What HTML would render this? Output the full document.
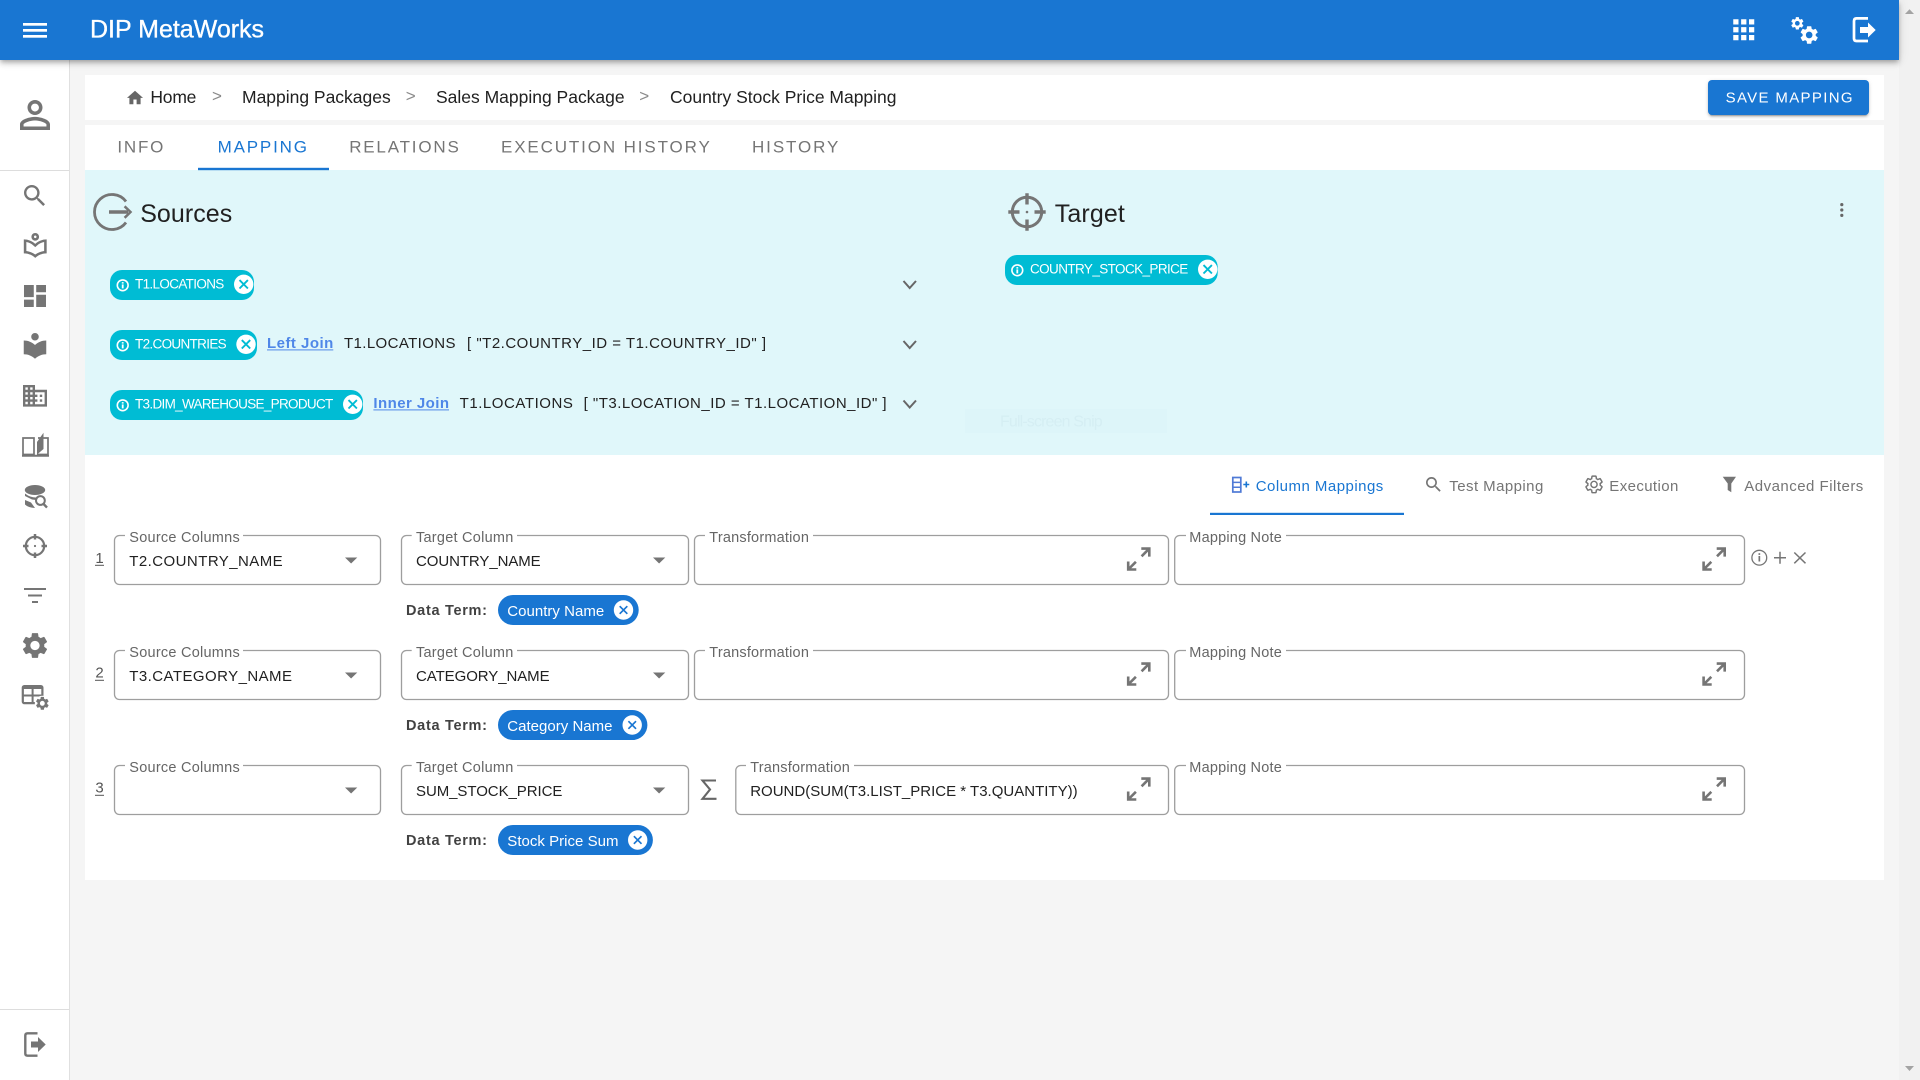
<!DOCTYPE html>
<html lang="en">
<head>
<meta charset="utf-8">
<title>DIP MetaWorks</title>
<style>
html,body{margin:0;padding:0;width:1920px;height:1080px;overflow:hidden;background:#f5f5f5}
div{position:absolute;box-sizing:border-box}
#side{left:0;top:60px;width:70px;height:1020px;background:#fff;border-right:1px solid #e0e0e0}
#head{left:0;top:0;width:1899px;height:60px;background:#1976d2;box-shadow:0 2px 4px -1px rgba(0,0,0,.2),0 4px 5px 0 rgba(0,0,0,.14),0 1px 10px 0 rgba(0,0,0,.12)}
#bar{left:1899px;top:0;width:21px;height:1080px;background:#f1f1f1}
#crumb{left:85px;top:75px;width:1799px;height:45px;background:#fff}
#tabs{left:85px;top:125px;width:1799px;height:45px;background:#fff}
#cyan{left:85px;top:170px;width:1799px;height:285px;background:#e0f7fa}
#map{left:85px;top:455px;width:1799px;height:425px;background:#fff}
#save{left:1708px;top:80px;width:161px;height:35px;border-radius:4px;background:#1976d2;box-shadow:0 3px 1px -2px rgba(0,0,0,.2),0 2px 2px 0 rgba(0,0,0,.14),0 1px 5px 0 rgba(0,0,0,.12)}
svg{position:absolute;left:0;top:0}
text{font-family:"Liberation Sans",sans-serif}
.crumb{font-size:17.5px;fill:#212121}
.sep{font-size:17px;fill:#8a8a8a}
.tab{font-size:17px;fill:#757575}
.h{font-size:25px;fill:#212121}
.chip{font-size:13.5px;fill:#fff}
.tx{font-size:15px;fill:#212121}
.lnk{font-size:15px;font-weight:bold;fill:#4f87e8}
.sub{font-size:15px;fill:#757575}
.lab{font-size:14.5px;fill:#666}
.val{font-size:15px;fill:#212121}
.num{font-size:15px;fill:#555}
.dt{font-size:14.5px;font-weight:bold;fill:#424242}
.ct{font-size:15px;fill:#fff}
.box{fill:#fff;stroke:#9e9e9e;stroke-width:1.3}
.exp{fill:none;stroke:#757575;stroke-width:2.6}
</style>
</head>
<body>
<div id="side"></div>
<div id="bar"></div>
<div id="crumb"></div>
<div id="tabs"></div>
<div id="cyan"></div>
<div id="map"></div>
<div id="save"></div>
<div id="head"></div>
<svg width="1920" height="1080" viewBox="0 0 1920 1080" xmlns="http://www.w3.org/2000/svg">
<defs>
<path id="gear" d="M19.14,12.94c0.04-0.3,0.06-0.61,0.06-0.94c0-0.32-0.02-0.64-0.07-0.94l2.03-1.58c0.18-0.14,0.23-0.41,0.12-0.61l-1.92-3.32c-0.12-0.22-0.37-0.29-0.59-0.22l-2.39,0.96c-0.5-0.38-1.03-0.7-1.62-0.94L14.4,2.81c-0.04-0.24-0.24-0.41-0.48-0.41h-3.84c-0.24,0-0.43,0.17-0.47,0.41L9.25,5.35C8.66,5.59,8.12,5.92,7.63,6.29L5.24,5.33c-0.22-0.08-0.47,0-0.59,0.22L2.74,8.87C2.62,9.08,2.66,9.34,2.86,9.48l2.03,1.58C4.84,11.36,4.8,11.69,4.8,12s0.02,0.64,0.07,0.94l-2.03,1.58c-0.18,0.14-0.23,0.41-0.12,0.61l1.92,3.32c0.12,0.22,0.37,0.29,0.59,0.22l2.39-0.96c0.5,0.38,1.03,0.7,1.62,0.94l0.36,2.54c0.05,0.24,0.24,0.41,0.48,0.41h3.84c0.24,0,0.44-0.17,0.47-0.41l0.36-2.54c0.59-0.24,1.13-0.56,1.62-0.94l2.39,0.96c0.22,0.08,0.47,0,0.59-0.22l1.92-3.32c0.12-0.22,0.07-0.47-0.12-0.61L19.14,12.94z M12,15.6c-1.98,0-3.6-1.62-3.6-3.6s1.62-3.6,3.6-3.6s3.6,1.62,3.6,3.6S13.98,15.6,12,15.6z"/>
<path id="srch" d="M15.5 14h-.79l-.28-.27C15.41 12.59 16 11.11 16 9.5 16 5.91 13.09 3 9.5 3S3 5.91 3 9.5 5.91 16 9.5 16c1.61 0 3.09-.59 4.23-1.57l.27.28v.79l5 4.99L20.49 19l-4.99-5zm-6 0C7.01 14 5 11.99 5 9.5S7.01 5 9.5 5 14 7.01 14 9.5 11.99 14 9.5 14z"/>
<g id="inf"><circle cx="0" cy="0" r="5.4" fill="none" stroke="#fff" stroke-width="1.6"/><rect x="-.9" y="-.9" width="1.8" height="4" fill="#fff"/><rect x="-.9" y="-3.2" width="1.8" height="1.5" fill="#fff"/></g>
<g id="cx"><circle cx="0" cy="0" r="9.7" fill="#fff"/><path d="M-4.2-4.2L4.2 4.2M4.2-4.2L-4.2 4.2" stroke="#00bcd4" stroke-width="1.9" fill="none"/></g>
<g id="bx"><circle cx="0" cy="0" r="9.7" fill="#fff"/><path d="M-3.8-3.8L3.8 3.8M3.8-3.8L-3.8 3.8" stroke="#1976d2" stroke-width="1.7" fill="none"/></g>
<g id="ex"><path class="exp" d="M0 2.6H8V10.6M7.5 3.1L.3 10.3"/><path class="exp" d="M-13.1 15.5V23.5H-5M-12.6 23L-5.4 15.8"/></g>
<path id="dd" d="M0 0H12.3L6.1 6Z" fill="#757575"/>
</defs>

<!-- header -->
<g fill="#fff">
<rect x="23" y="23" width="24" height="2.7"/><rect x="23" y="29" width="24" height="2.7"/><rect x="23" y="35" width="24" height="2.7"/>
<text x="90" y="37.7" font-size="25" textLength="174" stroke="#fff" stroke-width=".35">DIP MetaWorks</text>
<path transform="translate(1728 14) scale(1.3125)" d="M4 8h4V4H4v4zm6 12h4v-4h-4v4zm-6 0h4v-4H4v4zm0-6h4v-4H4v4zm6 0h4v-4h-4v4zm6-10v4h4V4h-4zm-6 4h4V4h-4v4zm6 6h4v-4h-4v4zm0 6h4v-4h-4v4z"/>
<use href="#gear" transform="translate(1789.6 15.6) scale(.645)"/>
<use href="#gear" transform="translate(1798.2 24) scale(.914)"/>
<path d="M1868 18.4H1856.5Q1854 18.4 1854 21V38.5Q1854 41 1856.5 41H1868" fill="none" stroke="#fff" stroke-width="2.7"/>
<path d="M1860 27H1868V22.5L1875.7 30L1868 37.5V33H1860Z"/>
</g>

<!-- scrollbar arrows -->
<path d="M1905 14H1914L1909.5 9.3Z" fill="#a3a3a3"/>
<path d="M1905 1066H1914L1909.5 1071Z" fill="#a3a3a3"/>

<!-- sidebar -->
<g fill="#757575">
<rect x="0" y="170" width="69" height="1" fill="#ddd"/>
<rect x="0" y="1009" width="69" height="1" fill="#ddd"/>
<path transform="translate(12.5 92.5) scale(1.875)" d="M12 5.9c1.16 0 2.1.94 2.1 2.1s-.94 2.1-2.1 2.1S9.9 9.16 9.9 8s.94-2.1 2.1-2.1m0 9c2.97 0 6.1 1.46 6.1 2.1v1.1H5.9V17c0-.64 3.13-2.1 6.1-2.1M12 4C9.79 4 8 5.79 8 8s1.79 4 4 4 4-1.79 4-4-1.79-4-4-4zm0 9c-2.67 0-8 1.34-8 4v3h16v-3c0-2.66-5.33-4-8-4z"/>
<use href="#srch" transform="translate(20.4 181.4) scale(1.2)"/>
<path transform="translate(20 229.2) scale(1.27)" d="M12 9c1.66 0 3-1.34 3-3s-1.34-3-3-3-3 1.34-3 3 1.34 3 3 3zm0-4c.55 0 1 .45 1 1s-.45 1-1 1-1-.45-1-1 .45-1 1-1zm0 6.55C9.64 9.35 6.48 8 3 8v11c3.48 0 6.64 1.35 9 3.55 2.36-2.19 5.52-3.55 9-3.55V8c-3.48 0-6.64 1.35-9 3.55zm7 5.58c-2.53.34-4.93 1.3-7 2.82-2.06-1.52-4.47-2.49-7-2.83V10.1c2.1.38 4.05 1.35 5.64 2.83L12 14.15l1.36-1.22c1.59-1.48 3.54-2.45 5.64-2.83v7.03z"/>
<path transform="translate(20.33 281.3) scale(1.222)" d="M3 13h8V3H3v10zm0 8h8v-6H3v6zm10 0h8V11h-8v10zm0-18v6h8V3h-8z"/>
<path transform="translate(20 330.5) scale(1.25)" d="M12 11.55C9.64 9.35 6.48 8 3 8v11c3.48 0 6.64 1.35 9 3.55 2.36-2.19 5.52-3.55 9-3.55V8c-3.48 0-6.64 1.35-9 3.55zM12 8c1.66 0 3-1.34 3-3s-1.34-3-3-3-3 1.34-3 3 1.34 3 3 3z"/>
<path transform="translate(20.6 381.4) scale(1.2)" d="M12 7V3H2v18h20V7H12zM6 19H4v-2h2v2zm0-4H4v-2h2v2zm0-4H4V9h2v2zm0-4H4V5h2v2zm4 12H8v-2h2v2zm0-4H8v-2h2v2zm0-4H8V9h2v2zm0-4H8V5h2v2zm10 12h-8v-2h2v-2h-2v-2h2v-2h-2V9h8v10zm-2-8h-2v2h2v-2zm0 4h-2v2h2v-2z"/>
<!-- book -->
<path d="M23 438H34V454.5H23ZM38 438H48V454.5H37" fill="none" stroke="#757575" stroke-width="1.7"/>
<path d="M22 454.8H49V456.7H22Z"/>
<path d="M37 442L43.5 432.7V449L37 454.5Z"/>
<!-- db search -->
<ellipse cx="35" cy="490" rx="10.2" ry="5"/>
<path d="M25 496L32 499.5L36 500V497.5Q30 497.5 25 493.5ZM25 500V504.5Q28 507.6 35 508L31 502.5Z"/>
<circle cx="40.4" cy="500.5" r="4.4" fill="#fff" stroke="#757575" stroke-width="2"/>
<path d="M43.6 504L47 507.6" stroke="#757575" stroke-width="2.4" fill="none"/>
<!-- crosshair -->
<circle cx="35" cy="546" r="9.2" fill="none" stroke="#757575" stroke-width="2.2"/>
<path d="M35 534V539.5M35 552.5V558M23 546H28.5M41.5 546H47" stroke="#757575" stroke-width="2.5" fill="none"/>
<circle cx="35" cy="546" r="1.1"/>
<!-- filter -->
<rect x="24" y="588" width="22" height="2"/><rect x="28" y="594.5" width="14" height="2"/><rect x="32" y="601" width="6" height="2"/>
<use href="#gear" transform="translate(19.5 630) scale(1.29)"/>
<!-- table gear -->
<rect x="22.8" y="686.1" width="19.6" height="17" rx="1.5" fill="none" stroke="#757575" stroke-width="2.2"/>
<rect x="22.8" y="686" width="19.6" height="3"/>
<path d="M32.6 688V703M23 695.5H42" stroke="#757575" stroke-width="2" fill="none"/>
<circle cx="42.3" cy="703.3" r="7.5" fill="#fff"/>
<use href="#gear" transform="translate(34.3 695.3) scale(.67)"/>
<!-- bottom exit -->
<path d="M37.5 1033.3H27.5Q25.3 1033.3 25.3 1035.5V1053.5Q25.3 1055.7 27.5 1055.7H37.5" fill="none" stroke="#757575" stroke-width="2.4"/>
<path d="M31 1041.5H38V1037L45.7 1044.5L38 1052V1047.5H31Z"/>
</g>

<!-- breadcrumb -->
<path transform="translate(125.4 88.3) scale(.8)" d="M10 20v-6h4v6h5v-8h3L12 3 2 12h3v8z" fill="#666"/>
<text class="crumb" x="150.4" y="102.8" textLength="46">Home</text>
<text class="sep" x="212" y="101.6" textLength="10">&gt;</text>
<text class="crumb" x="242" y="102.8" textLength="148.7">Mapping Packages</text>
<text class="sep" x="405.8" y="101.6" textLength="10">&gt;</text>
<text class="crumb" x="436" y="102.8" textLength="188.6">Sales Mapping Package</text>
<text class="sep" x="639.2" y="101.6" textLength="10">&gt;</text>
<text class="crumb" x="670" y="102.8" textLength="226.5">Country Stock Price Mapping</text>
<text x="1725.6" y="102.7" font-size="15" fill="#fff" textLength="127">SAVE MAPPING</text>

<!-- tabs -->
<text class="tab" x="117.4" y="152.7" textLength="46">INFO</text>
<text class="tab" x="217.6" y="152.7" textLength="89.4" style="fill:#1976d2">MAPPING</text>
<rect x="198" y="167.8" width="131" height="2.4" fill="#1976d2"/>
<text class="tab" x="349.2" y="152.7" textLength="109.6">RELATIONS</text>
<text class="tab" x="501" y="152.7" textLength="208.8">EXECUTION HISTORY</text>
<text class="tab" x="752" y="152.7" textLength="86.4">HISTORY</text>

<!-- sources -->
<path d="M126 201.5A17.5 17.5 0 1 0 126 222.5" fill="none" stroke="#757575" stroke-width="2.8"/>
<path d="M109 212H128" fill="none" stroke="#757575" stroke-width="3.4"/>
<path d="M124.6 206.3L130.5 212L124.6 217.8" fill="none" stroke="#757575" stroke-width="2.5"/>
<text class="h" x="140.2" y="221.8" textLength="92">Sources</text>

<rect x="110" y="270" width="144" height="30" rx="12" fill="#00bcd4"/>
<use href="#inf" transform="translate(122.7 285.3)"/>
<text class="chip" x="135" y="288.6" textLength="89.3">T1.LOCATIONS</text>
<use href="#cx" transform="translate(243.7 284.3)"/>

<rect x="110" y="330" width="147" height="30" rx="12" fill="#00bcd4"/>
<use href="#inf" transform="translate(122.7 345.3)"/>
<text class="chip" x="135" y="348.6" textLength="91.7">T2.COUNTRIES</text>
<use href="#cx" transform="translate(246 344.3)"/>
<text class="lnk" x="267" y="348" textLength="66.3">Left Join</text>
<rect x="267" y="349.4" width="66.3" height="1" fill="#4f87e8"/>
<text class="tx" x="344" y="348" textLength="111.5">T1.LOCATIONS</text>
<text class="tx" x="467" y="348" textLength="299">[ "T2.COUNTRY_ID = T1.COUNTRY_ID" ]</text>

<rect x="110" y="390" width="253" height="30" rx="12" fill="#00bcd4"/>
<use href="#inf" transform="translate(122.7 405.3)"/>
<text class="chip" x="135" y="408.6" textLength="198.3">T3.DIM_WAREHOUSE_PRODUCT</text>
<use href="#cx" transform="translate(352.7 404.3)"/>
<text class="lnk" x="373.4" y="408" textLength="75.6">Inner Join</text>
<rect x="373.4" y="409.4" width="75.6" height="1" fill="#4f87e8"/>
<text class="tx" x="459.6" y="408" textLength="113.3">T1.LOCATIONS</text>
<text class="tx" x="583.6" y="408" textLength="303">[ "T3.LOCATION_ID = T1.LOCATION_ID" ]</text>

<path d="M903.5 281L909.7 288L916 281M903.5 341L909.7 348L916 341M903.5 400.5L909.7 407.5L916 400.5" fill="none" stroke="#666" stroke-width="2"/>

<!-- target -->
<circle cx="1027" cy="212" r="14.7" fill="none" stroke="#757575" stroke-width="3"/>
<path d="M1027 193.3V204.5M1027 219.5V230.7M1008.3 212H1019.5M1034.5 212H1045.7" stroke="#757575" stroke-width="3.4" fill="none"/>
<circle cx="1027" cy="212" r="1.3" fill="#757575"/>
<text class="h" x="1054.8" y="222" textLength="70">Target</text>
<rect x="1005" y="255" width="212.7" height="30" rx="12" fill="#00bcd4"/>
<use href="#inf" transform="translate(1017.3 270.3)"/>
<text class="chip" x="1030" y="273.6" textLength="158.3">COUNTRY_STOCK_PRICE</text>
<use href="#cx" transform="translate(1207.7 269.3)"/>
<g fill="#666"><circle cx="1841.8" cy="204.6" r="1.6"/><circle cx="1841.8" cy="210" r="1.6"/><circle cx="1841.8" cy="215.4" r="1.6"/></g>

<rect x="965" y="409" width="202" height="24" fill="#ddf5f9"/>
<text x="1000" y="426.7" font-size="16" fill="#d5eef3" textLength="102.7">Full-screen Snip</text>

<!-- sub tabs -->
<rect x="1232.8" y="477.5" width="8" height="14.5" fill="none" stroke="#4f7ad6" stroke-width="1.7"/>
<path d="M1232.8 482.4H1240.8M1232.8 487.2H1240.8" stroke="#4f7ad6" stroke-width="1.5" fill="none"/>
<path d="M1243.3 484.5H1249.3M1246.3 481.5V487.5" stroke="#1976d2" stroke-width="1.6" fill="none"/>
<text class="sub" x="1255.7" y="491" textLength="127.6" style="fill:#1976d2">Column Mappings</text>
<rect x="1210" y="512.8" width="194" height="2.2" fill="#1976d2"/>
<use href="#srch" transform="translate(1423.5 474.5) scale(.84)" fill="#757575"/>
<text class="sub" x="1449.3" y="491" textLength="94">Test Mapping</text>
<use href="#gear" transform="translate(1583.7 474.1) scale(.86)" fill="none" stroke="#757575" stroke-width="1.7"/>
<text class="sub" x="1609.3" y="491" textLength="69">Execution</text>
<path d="M1722.7 476.7H1736L1731.3 483.5V492.3L1727.7 490V483.5Z" fill="#757575"/>
<text class="sub" x="1744.3" y="491" textLength="119">Advanced Filters</text>

<!-- row 1 -->
<g>
<text class="num" x="99.5" y="563" text-anchor="middle">1</text><rect x="95" y="564.8" width="9" height="1" fill="#555"/>
<rect class="box" x="114.5" y="535.5" width="266" height="49" rx="5"/><rect x="125" y="532" width="118" height="6" fill="#fff"/>
<text class="lab" x="129.3" y="541.8" textLength="110.4">Source Columns</text>
<text class="val" x="129.3" y="566" textLength="153.4">T2.COUNTRY_NAME</text>
<use href="#dd" x="345" y="557.5"/>
<rect class="box" x="401.5" y="535.5" width="287" height="49" rx="5"/><rect x="411.7" y="532" width="105.3" height="6" fill="#fff"/>
<text class="lab" x="416" y="541.8" textLength="97.3">Target Column</text>
<text class="val" x="416" y="566" textLength="124.7">COUNTRY_NAME</text>
<use href="#dd" x="653" y="557.5"/>
<rect class="box" x="694.5" y="535.5" width="474" height="49" rx="5"/><rect x="705" y="532" width="108" height="6" fill="#fff"/>
<text class="lab" x="709.3" y="541.8" textLength="99.6">Transformation</text>
<use href="#ex" transform="translate(1141.3 546)"/>
<rect class="box" x="1174.7" y="535.5" width="569.8" height="49" rx="5"/><rect x="1186" y="532" width="100" height="6" fill="#fff"/>
<text class="lab" x="1189.3" y="541.8" textLength="92.5">Mapping Note</text>
<use href="#ex" transform="translate(1716.7 546)"/>
<text class="dt" x="406" y="615" textLength="81">Data Term:</text>
<rect x="498" y="595" width="140.7" height="30" rx="15" fill="#1976d2"/>
<text class="ct" x="507.3" y="616" textLength="96.9">Country Name</text>
<use href="#bx" transform="translate(623.5 610)"/>
<circle cx="1759.3" cy="557.7" r="7.4" fill="none" stroke="#757575" stroke-width="1.3"/>
<rect x="1758.5" y="556" width="1.7" height="5.5" fill="#757575"/><rect x="1758.5" y="553.2" width="1.7" height="1.7" fill="#757575"/>
<path d="M1774 557.7H1786M1780 551.7V563.7M1794.3 552.5L1805.5 563.3M1805.5 552.5L1794.3 563.3" stroke="#757575" stroke-width="1.5" fill="none"/>
</g>

<!-- row 2 -->
<g transform="translate(0 115)">
<text class="num" x="99.5" y="562.5" text-anchor="middle">2</text><rect x="95" y="564.8" width="9" height="1" fill="#555"/>
<rect class="box" x="114.5" y="535.5" width="266" height="49" rx="5"/><rect x="125" y="532" width="118" height="6" fill="#fff"/>
<text class="lab" x="129.3" y="541.8" textLength="110.4">Source Columns</text>
<text class="val" x="129.3" y="566" textLength="162.7">T3.CATEGORY_NAME</text>
<use href="#dd" x="345" y="557.5"/>
<rect class="box" x="401.5" y="535.5" width="287" height="49" rx="5"/><rect x="411.7" y="532" width="105.3" height="6" fill="#fff"/>
<text class="lab" x="416" y="541.8" textLength="97.3">Target Column</text>
<text class="val" x="416" y="566" textLength="133.6">CATEGORY_NAME</text>
<use href="#dd" x="653" y="557.5"/>
<rect class="box" x="694.5" y="535.5" width="474" height="49" rx="5"/><rect x="705" y="532" width="108" height="6" fill="#fff"/>
<text class="lab" x="709.3" y="541.8" textLength="99.6">Transformation</text>
<use href="#ex" transform="translate(1141.3 546)"/>
<rect class="box" x="1174.7" y="535.5" width="569.8" height="49" rx="5"/><rect x="1186" y="532" width="100" height="6" fill="#fff"/>
<text class="lab" x="1189.3" y="541.8" textLength="92.5">Mapping Note</text>
<use href="#ex" transform="translate(1716.7 546)"/>
<text class="dt" x="406" y="615" textLength="81">Data Term:</text>
<rect x="498" y="595" width="149.4" height="30" rx="15" fill="#1976d2"/>
<text class="ct" x="507.3" y="616" textLength="105.2">Category Name</text>
<use href="#bx" transform="translate(632.2 610)"/>
</g>

<!-- row 3 -->
<g transform="translate(0 230)">
<text class="num" x="99.5" y="562.5" text-anchor="middle">3</text><rect x="95" y="564.8" width="9" height="1" fill="#555"/>
<rect class="box" x="114.5" y="535.5" width="266" height="49" rx="5"/><rect x="125" y="532" width="118" height="6" fill="#fff"/>
<text class="lab" x="129.3" y="541.8" textLength="110.4">Source Columns</text>
<use href="#dd" x="345" y="557.5"/>
<rect class="box" x="401.5" y="535.5" width="287" height="49" rx="5"/><rect x="411.7" y="532" width="105.3" height="6" fill="#fff"/>
<text class="lab" x="416" y="541.8" textLength="97.3">Target Column</text>
<text class="val" x="416" y="566" textLength="146.4">SUM_STOCK_PRICE</text>
<use href="#dd" x="653" y="557.5"/>
<path d="M716 550.5H702.5L710 559.5L702.5 568.8H716.5" fill="none" stroke="#666" stroke-width="2.1"/>
<rect class="box" x="735.8" y="535.5" width="432.7" height="49" rx="5"/><rect x="746" y="532" width="108" height="6" fill="#fff"/>
<text class="lab" x="750.2" y="541.8" textLength="99.6">Transformation</text>
<text class="val" x="750.2" y="566" textLength="327.4">ROUND(SUM(T3.LIST_PRICE * T3.QUANTITY))</text>
<use href="#ex" transform="translate(1141.3 546)"/>
<rect class="box" x="1174.7" y="535.5" width="569.8" height="49" rx="5"/><rect x="1186" y="532" width="100" height="6" fill="#fff"/>
<text class="lab" x="1189.3" y="541.8" textLength="92.5">Mapping Note</text>
<use href="#ex" transform="translate(1716.7 546)"/>
<text class="dt" x="406" y="615" textLength="81">Data Term:</text>
<rect x="498" y="595" width="154.9" height="30" rx="15" fill="#1976d2"/>
<text class="ct" x="507.3" y="616" textLength="111.2">Stock Price Sum</text>
<use href="#bx" transform="translate(637.7 610)"/>
</g>
</svg>
</body>
</html>
